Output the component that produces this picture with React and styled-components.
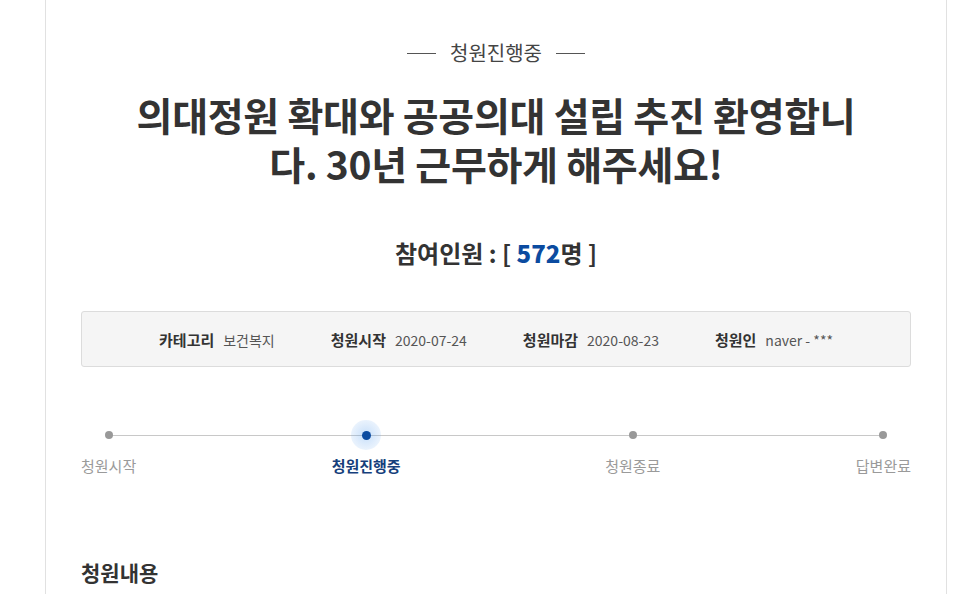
import styled, { createGlobalStyle } from 'styled-components'

const GlobalStyle = createGlobalStyle`
  body {
    margin: 0;
    background: #fff;
    font-family: "Noto Sans CJK KR", "Noto Sans", sans-serif;
    color: #333;
  }
`

const Page = styled.div`
  width: 902px;
  margin-left: 45px;
  min-height: 594px;
  box-sizing: border-box;
  border-left: 1px solid #e1e1e1;
  border-right: 1px solid #e1e1e1;
  padding: 39px 35px 0;
`

const Status = styled.div`
  display: flex;
  align-items: center;
  justify-content: center;
  gap: 14px;
  font-size: 20px;
  line-height: 28px;
  color: #444;

  &::before,
  &::after {
    content: '';
    width: 29px;
    height: 1px;
    background: #555;
  }
`

const Title = styled.h1`
  max-width: 750px;
  margin: 23px auto 0;
  font-size: 39px;
  line-height: 49px;
  font-weight: 700;
  text-align: center;
  color: #333;
  letter-spacing: -0.3px;
  word-break: break-all;
`

const Count = styled.div`
  margin-top: 49px;
  font-size: 24px;
  line-height: 32px;
  font-weight: 700;
  text-align: center;
  color: #333;

  strong {
    color: #0b4ba0;
  }
`

const InfoBox = styled.ul`
  display: flex;
  justify-content: center;
  align-items: center;
  gap: 56px;
  height: 56px;
  box-sizing: border-box;
  margin: 42px 0 0;
  padding: 0;
  list-style: none;
  background: #f5f5f5;
  border: 1px solid #dcdcdc;
  border-radius: 3px;
`

const InfoItem = styled.li`
  display: flex;
  align-items: baseline;
  gap: 9px;
  font-size: 14px;
  color: #555;

  b {
    font-size: 15px;
    color: #333;
    font-weight: 700;
  }
`

const Steps = styled.ol`
  position: relative;
  display: flex;
  justify-content: space-between;
  margin: 53px 0 0;
  padding: 0;
  list-style: none;

  &::before {
    content: '';
    position: absolute;
    top: 15px;
    left: 27px;
    right: 28px;
    height: 1px;
    background: #c8c8c8;
  }
`

const Step = styled.li`
  position: relative;
  display: flex;
  flex-direction: column;
  align-items: center;
  gap: 5px;
  font-size: 15px;
  line-height: 22px;
  color: ${(p) => (p.$active ? '#163f7c' : '#9a9a9a')};
  font-weight: ${(p) => (p.$active ? 700 : 400)};
  margin-right: ${(p) => (p.$active ? '9px' : '0')};
`

const DotWrap = styled.span`
  display: flex;
  align-items: center;
  justify-content: center;
  width: 30px;
  height: 30px;
  border-radius: 50%;
  background: ${(p) =>
    p.$active
      ? 'radial-gradient(circle, rgba(70,150,240,0.3) 0%, rgba(100,165,240,0.18) 55%, rgba(130,185,245,0.05) 100%)'
      : 'transparent'};
`

const Dot = styled.span`
  width: ${(p) => (p.$active ? '9px' : '8px')};
  height: ${(p) => (p.$active ? '9px' : '8px')};
  border-radius: 50%;
  background: ${(p) => (p.$active ? '#0b4ba0' : '#999')};
`

const SectionTitle = styled.h2`
  margin: 81px 0 0;
  font-size: 21px;
  line-height: 28px;
  font-weight: 700;
  color: #333;
`

const info = [
  ['카테고리', '보건복지'],
  ['청원시작', '2020-07-24'],
  ['청원마감', '2020-08-23'],
  ['청원인', 'naver - ***'],
]

const steps = ['청원시작', '청원진행중', '청원종료', '답변완료']

const App = () => {
  return (
    <>
      <GlobalStyle />
      <Page>
        <Status>청원진행중</Status>
        <Title>의대정원 확대와 공공의대 설립 추진 환영합니다. 30년 근무하게 해주세요!</Title>
        <Count>
          참여인원 : [ <strong>572</strong>명 ]
        </Count>
        <InfoBox>
          {info.map(([key, value]) => (
            <InfoItem key={key}>
              <b>{key}</b>
              <span>{value}</span>
            </InfoItem>
          ))}
        </InfoBox>
        <Steps>
          {steps.map((label, i) => (
            <Step key={label} $active={i === 1}>
              <DotWrap $active={i === 1}>
                <Dot $active={i === 1} />
              </DotWrap>
              {label}
            </Step>
          ))}
        </Steps>
        <SectionTitle>청원내용</SectionTitle>
      </Page>
    </>
  )
}

export default App
